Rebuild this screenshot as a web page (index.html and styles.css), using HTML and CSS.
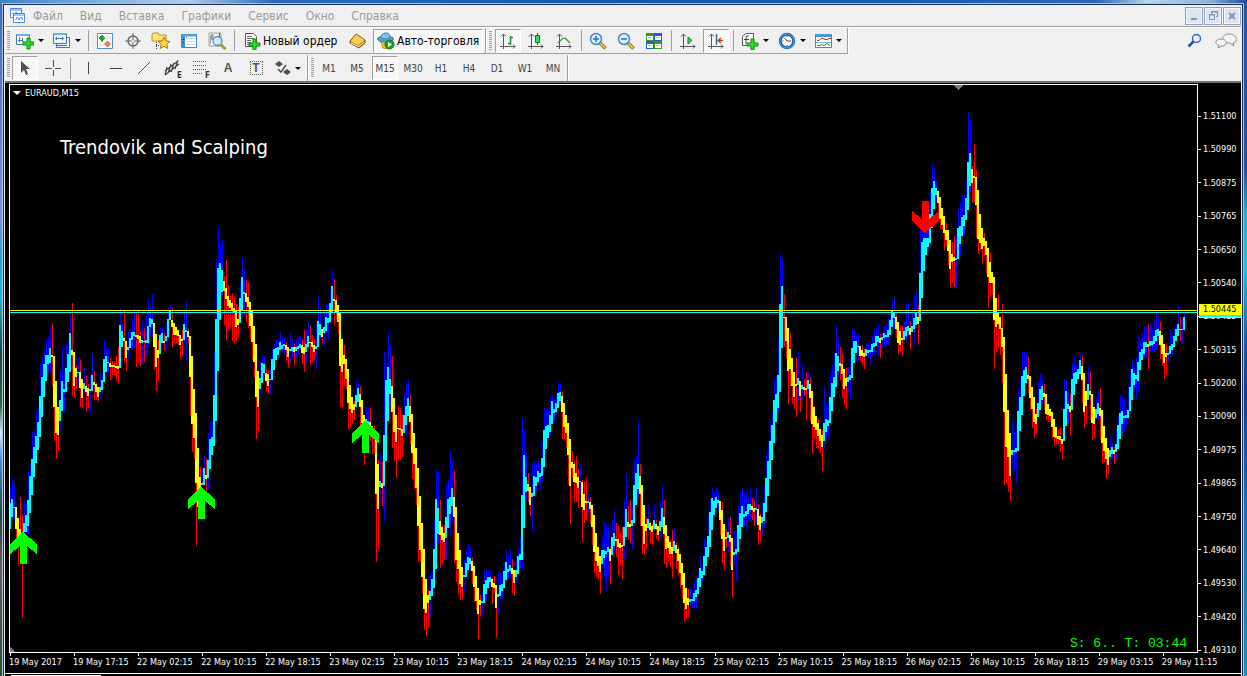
FILE: index.html
```html
<!DOCTYPE html>
<html lang="ru">
<head>
<meta charset="utf-8">
<title>EURAUD,M15</title>
<link rel="stylesheet" href="styles.css">
</head>
<body>
<div class="window">
  <header class="menubar">
    <svg class="app-icon" width="16" height="16" viewBox="0 0 16 16" fill="#fff" stroke="#4a86e8"><path d="M.5 .5h11v9H.5z"/><path d="M.5 2h11M2 5l2 2 2-3 2 2"/><path d="M3.500 5.500h11v9h-11z"/><path d="M3.500 7h11M5.500 12l2-3 1.500 3 2-3 2 3"/></svg>
    <nav class="menu">
      <button>Файл</button><button>Вид</button><button>Вставка</button><button>Графики</button><button>Сервис</button><button>Окно</button><button>Справка</button>
    </nav>
    <div class="win-buttons">
      <button aria-label="Свернуть"><svg width="16" height="16"><path d="M5 11h6" stroke="#8494a8" stroke-width="2"/></svg></button>
      <button aria-label="Восстановить"><svg width="16" height="16" fill="none" stroke="#8494a8"><path d="M6.500 6V3.500h6v5H11M6 4h7"/><path d="M4.500 6.500h5v5h-5zM4 7h6"/></svg></button>
      <button aria-label="Закрыть"><svg width="16" height="16"><path d="M5 5l6 6M11 5l-6 6" stroke="#8494a8" stroke-width="2"/></svg></button>
    </div>
  </header>

  <div class="toolrow">
    <div class="group">
      <i class="grip"></i>
      <button class="drop" aria-label="Новый график"><svg width="18" height="18" viewBox="0 0 18 18"><path d="M.5 2.500h13v10H.5z" fill="#fff" stroke="#3d7ab8"/><path d="M1 3h12" stroke="#6fb0e8" stroke-width="2"/><path d="M3.500 5v5M2 8.500h5M6.500 6v4" stroke="#3d7ab8"/><path d="M11 6h3v4h4v3h-4v4h-3v-4H7v-3h4z" fill="#2be02b" stroke="#088a08"/></svg></button>
      <button class="drop" aria-label="Профили"><svg width="18" height="18" viewBox="0 0 18 18" fill="#e9f4fd" stroke="#3d7ab8"><path d="M3.500 5.500h13v10h-13z"/><path d="M.5 1.500h13v10H.5z"/><path d="M1 2h12" stroke="#6fb0e8" stroke-width="2"/><path d="M2 6.500h9M3.500 5v3M9.500 5v3M4 13.500h10"/></svg></button>
      <i class="sep"></i>
      <button aria-label="Обзор рынка"><svg width="16" height="16" viewBox="0 0 16 16"><path d="M.5 .5h15v15H.5z" fill="#fff" stroke="#4a90cf"/><path d="M9 3h5M9 5h5M2 11h5M2 13h4" stroke="#cfdbe6"/><path d="M5 2l3 3-3 3-3-3z" fill="#22bb33" stroke="#0a7c18" stroke-width=".7"/><path d="M5 4v5" stroke="#0a7c18"/><path d="M10.500 14l-3-3 3-3 3 3z" fill="#f0884a" stroke="#b83a08" stroke-width=".7"/></svg></button>
      <button aria-label="Окно данных"><svg width="16" height="16" viewBox="0 0 16 16" fill="none" stroke="#666"><circle cx="8" cy="8" r="5" stroke-width="1.500"/><path d="M8 0v7M8 9v7M0 8h7M9 8h7"/></svg></button>
      <button aria-label="Навигатор"><svg width="20" height="18" viewBox="0 0 20 18"><path d="M1 2l1-1h5l1 2h7v6H1z" fill="#ffe47a" stroke="#c09020"/><path d="M5.500 10v7M5 13.500h3" stroke="#444" stroke-dasharray="1 1"/><path d="M13 5l1.800 4 4.200.4-3.200 2.800 1 4.300-3.800-2.300-3.800 2.300 1-4.300L7 9.400l4.200-.4z" fill="#ffd84a" stroke="#b07a14"/></svg></button>
      <button aria-label="Терминал"><svg width="16" height="16" viewBox="0 0 16 16"><path d="M.5 1.500h15v13H.5z" fill="#fff" stroke="#3f87c9"/><path d="M1 2.500h14" stroke="#55a0e0" stroke-width="2"/><path d="M1 3h3v11H1z" fill="#3f8fd6"/><path d="M6 5.500h8M6 8.500h8M6 11.500h8" stroke="#c9d9e8"/><path d="M2 6.500h1M2 9.500h1" stroke="#123"/><path d="M5 4.500h1" stroke="#e22"/></svg></button>
      <button aria-label="Тестер стратегий"><svg width="19" height="18" viewBox="0 0 19 18"><path d="M1 1v13h12V1zM2.500 3v9M5 2v4" fill="#f6f6f6" stroke="#a0a0a0"/><path d="M4 2v6M11.500 1v6" stroke="#555"/><path d="M12.500 12.500l5 4.500" stroke="#c49020" stroke-width="3"/><circle cx="9.500" cy="9" r="4.500" fill="#cfe8fb" fill-opacity=".9" stroke="#4a90d0" stroke-width="1.300"/></svg></button>
      <i class="sep"></i>
      <button class="wide order"><svg width="17" height="18" viewBox="0 0 17 18"><path d="M1.500 1.500h8l3 3v10h-11z" fill="#fff" stroke="#555"/><path d="M3 4.500h5M3 6.500h7M3 8.500h4M3 10.500h4M3 12.500h3" stroke="#666"/><path d="M9 7h3v4h4v3h-4v4H9v-4H5v-3h4z" fill="#2be02b" stroke="#088a08"/></svg>Новый ордер</button>
      <button aria-label="Редактор MetaEditor"><svg width="17" height="16" viewBox="0 0 17 16"><path d="M1 8l6-7 9 6v3l-6 5-9-5z" fill="#b87818" stroke="#8a560c"/><path d="M1.500 8.500L7 1.500l8.500 5.500-6 5z" fill="#f8cf58"/><path d="M2 10l8 3.500 5-4.500" fill="none" stroke="#fff0b8"/></svg></button>
      <button class="wide auto pressed"><svg width="18" height="18" viewBox="0 0 18 18"><path d="M3 8l3 8q5 2 8-3l1-6z" fill="#f0c23c" stroke="#b88a18"/><ellipse cx="8.500" cy="7" rx="8" ry="3" fill="#5ba4d4" stroke="#2d74a8"/><path d="M4 6q0-5 5-5 4 0 4 5-4 2-9 0z" fill="#84c4e8" stroke="#3b84b4"/><circle cx="12.500" cy="12.500" r="4.500" fill="#16a516" stroke="#0b7a0b"/><path d="M11 10l4 2.500-4 2.500z" fill="#fff"/></svg>Авто-торговля</button>
    </div>
    <div class="group second">
      <i class="grip"></i>
      <button class="pressed" aria-label="Бары"><svg width="16" height="16" viewBox="0 0 16 16" fill="none" stroke="#555"><path d="M3.500 16V1M1 3.500L3.500 1 6 3.500M0 13.500h15M13 11.500l2 2-2 2"/><path d="M10.500 3v9M8 10.500h2M11 4.500h2" stroke="#1f8a3a" stroke-width="1.500"/></svg></button>
      <button aria-label="Свечи"><svg width="16" height="16" viewBox="0 0 16 16" fill="none" stroke="#555"><path d="M3.500 16V1M1 3.500L3.500 1 6 3.500M0 13.500h15M13 11.500l2 2-2 2"/><path d="M9.500 0v12" stroke="#087a20"/><path d="M7.500 2.500h4v7h-4z" fill="#2fe060" stroke="#087a20"/></svg></button>
      <button aria-label="Линия"><svg width="16" height="16" viewBox="0 0 16 16" fill="none" stroke="#555"><path d="M3.500 16V1M1 3.500L3.500 1 6 3.500M0 13.500h15M13 11.500l2 2-2 2"/><path d="M2 10l4-4 3-1 5 5" stroke="#2a9a48" stroke-width="1.300"/></svg></button>
      <i class="sep"></i>
      <button aria-label="Приблизить"><svg width="18" height="18" viewBox="0 0 18 18"><path d="M10.500 10.500l6 6" stroke="#a87410" stroke-width="3.500"/><path d="M11 11l5 5" stroke="#f5d050" stroke-width="1.500"/><circle cx="7" cy="7" r="5.500" fill="#d8effc" stroke="#4a88c0" stroke-width="1.500"/><path d="M4 7h6M7 4v6" stroke="#2c70ac" stroke-width="1.500"/></svg></button>
      <button aria-label="Отдалить"><svg width="18" height="18" viewBox="0 0 18 18"><path d="M10.500 10.500l6 6" stroke="#a87410" stroke-width="3.500"/><path d="M11 11l5 5" stroke="#f5d050" stroke-width="1.500"/><circle cx="7" cy="7" r="5.500" fill="#d8effc" stroke="#4a88c0" stroke-width="1.500"/><path d="M4 7h6" stroke="#2c70ac" stroke-width="1.500"/></svg></button>
      <button aria-label="Окна рядом"><svg width="16" height="16" viewBox="0 0 16 16"><path d="M0 0h8v8H0z" fill="#3d9a12"/><path d="M8 0h8v8H8z" fill="#2060c8"/><path d="M0 8h8v8H0z" fill="#2060c8"/><path d="M8 8h8v8H8z" fill="#3d9a12"/><path d="M1 3h6v4H1zM9 3h6v4H9zM1 11h6v4H1zM9 11h6v4H9z" fill="#fff"/><path d="M2 4.500h4M10 4.500h4M2 12.500h4M10 12.500h4" stroke="#a8c4e8"/></svg></button>
      <i class="sep"></i>
      <button aria-label="Автопрокрутка"><svg width="16" height="16" viewBox="0 0 16 16" fill="none" stroke="#555"><path d="M3.500 16V1M1 3.500L3.500 1 6 3.500M0 13.500h15M13 11.500l2 2-2 2"/><path d="M8 4l4 3.500L8 11z" fill="#4fd46a" stroke="#087a20"/></svg></button>
      <button class="pressed" aria-label="Сдвиг графика"><svg width="16" height="16" viewBox="0 0 16 16" fill="none" stroke="#555"><path d="M3.500 16V1M1 3.500L3.500 1 6 3.500M0 13.500h15M13 11.500l2 2-2 2"/><path d="M8.500 1v11" stroke="#3070a0" stroke-width="1.500"/><path d="M10 7.500h5M13 5l-3 2.500L13 10" stroke="#c03a08" stroke-width="1.300"/></svg></button>
      <i class="sep"></i>
      <button class="drop" aria-label="Индикаторы"><svg width="18" height="18" viewBox="0 0 18 18"><path d="M1.500 4.500l3-3h8v12h-11z" fill="#fff" stroke="#555"/><path d="M8 4q-3-1-3 2v6M3 7.500h5" fill="none" stroke="#444"/><path d="M10 7h3v4h4v3h-4v4h-3v-4H6v-3h4z" fill="#2be02b" stroke="#088a08"/></svg></button>
      <button class="drop" aria-label="Периоды"><svg width="18" height="18" viewBox="0 0 18 18"><circle cx="9" cy="9" r="6.700" fill="#fff" stroke="#155cae" stroke-width="3"/><circle cx="9" cy="9" r="7" fill="none" stroke="#50a8f0"/><path d="M9 9L6.500 6M9 9h4M9 4v1M9 13v1M4.500 9h1" stroke="#444" fill="none"/></svg></button>
      <button class="drop" aria-label="Шаблоны"><svg width="17" height="16" viewBox="0 0 17 16"><path d="M.5 1.500h16v13H.5z" fill="#fff" stroke="#3f87c9"/><path d="M1 2.500h15" stroke="#4a98dc" stroke-width="3"/><path d="M1 9.500h15" stroke="#7aaede"/><path d="M2 7.500h2l2-2h2l2 1h2l2-1h2" fill="none" stroke="#a8321a"/><path d="M2 12.500h3l2-1 2 1 3-2 3 2" fill="none" stroke="#228a32"/></svg></button>
    </div>
    <div class="tools-right">
      <button aria-label="Поиск"><svg width="16" height="16" viewBox="0 0 16 16"><circle cx="9.500" cy="5.500" r="4" fill="#eaf2ff" stroke="#2f62d0" stroke-width="1.500"/><path d="M6.500 8.500L1.500 13.500" stroke="#2450b8" stroke-width="2.500"/></svg></button>
      <button aria-label="Сообщения"><svg width="22" height="16" viewBox="0 0 22 16" fill="#f4f4f4" stroke="#8c8c8c"><path d="M14 1c9 0 9 9 4 9l1 3-4-3C5 10 6 1 14 1z"/><path d="M6 6c7 0 7 7 1 7l-4 2 1-2.500C-1 11 0 6 6 6z"/></svg></button>
    </div>
  </div>

  <div class="toolrow lower">
    <div class="group">
      <i class="grip"></i>
      <button class="pressed" aria-label="Курсор"><svg width="16" height="16" viewBox="0 0 16 16"><path d="M4 1v12l3-3 2 5 2-1-2-5h4z" fill="#505050"/></svg></button>
      <button aria-label="Перекрестие"><svg width="16" height="16" stroke="#505050"><path d="M8.500 0v7M8.500 10v6M0 8.500h7M10 8.500h6"/></svg></button>
      <i class="sep"></i>
      <button aria-label="Вертикальная линия"><svg width="16" height="16"><path d="M8.500 2v12" stroke="#444"/></svg></button>
      <button aria-label="Горизонтальная линия"><svg width="16" height="16"><path d="M2 8.500h12" stroke="#444"/></svg></button>
      <button aria-label="Трендовая линия"><svg width="16" height="16"><path d="M2 14L14 2" stroke="#555"/></svg></button>
      <button class="tagged" aria-label="Канал"><svg width="16" height="16" fill="none" stroke="#444"><path d="M1 11l13-10M1 15L15 4M3 7l-2 8M7 4L4 13M10 3L7 12M14 0l-3 9" stroke-width="1.200"/></svg><small>E</small></button>
      <button class="tagged" aria-label="Фибоначчи"><svg width="16" height="16" stroke="#555" stroke-dasharray="1 1"><path d="M1 1.500h14M1 5.500h14M1 9.500h14M1 13.500h9"/></svg><small>F</small></button>
      <button class="letter">A</button>
      <button class="letter boxed"><span>T</span></button>
      <button class="drop" aria-label="Стрелки"><svg width="16" height="16" viewBox="0 0 16 16" fill="#505050"><path d="M4 1l4 3-4 3-4-3zM12 9l4 3-4 3-4-3z"/><path d="M3 9l3 3 5-7" fill="none" stroke="#505050" stroke-width="1.500"/></svg></button>
    </div>
    <div class="group periods">
      <i class="grip"></i>
      <button>M1</button><button>M5</button><button class="pressed">M15</button><button>M30</button><button>H1</button><button>H4</button><button>D1</button><button>W1</button><button>MN</button>
    </div>
  </div>

  <main class="chart">
    <div class="plot">
      <svg id="candles" viewBox="10 85 1187 567" preserveAspectRatio="none" shape-rendering="crispEdges" role="img" aria-label="EURAUD M15"></svg>
      <div class="symbol"><i class="caret"></i>EURAUD,M15</div>
      <h1>Trendovik and Scalping</h1>
      <div class="timer">S: 6.. T: 03:44</div>
    </div>
    <div class="prices">
      <ul>
        <li>1.51100</li><li>1.50990</li><li>1.50875</li><li>1.50765</li><li>1.50650</li><li>1.50540</li><li>1.50425</li><li>1.50315</li><li>1.50200</li><li>1.50090</li><li>1.49975</li><li>1.49865</li><li>1.49750</li><li>1.49640</li><li>1.49530</li><li>1.49420</li><li>1.49310</li>
      </ul>
      <b class="current">1.50445</b>
    </div>
    <ul class="times">
      <li>19 May 2017</li><li>19 May 17:15</li><li>22 May 02:15</li><li>22 May 10:15</li><li>22 May 18:15</li><li>23 May 02:15</li><li>23 May 10:15</li><li>23 May 18:15</li><li>24 May 02:15</li><li>24 May 10:15</li><li>24 May 18:15</li><li>25 May 02:15</li><li>25 May 10:15</li><li>25 May 18:15</li><li>26 May 02:15</li><li>26 May 10:15</li><li>26 May 18:15</li><li>29 May 03:15</li><li>29 May 11:15</li>
    </ul>
  </main>
  <div class="tabs"><i></i></div>
</div>
<script src="chart.js"></script>
</body>
</html>
```
FILE: styles.css
```css
* { box-sizing: border-box; }
html, body { height: 100%; }
body {
  margin: 0;
  padding: 4px 4px 0 3px;
  display: flex;
  font-family: "DejaVu Sans Condensed", "DejaVu Sans", sans-serif;
  background:
    linear-gradient(90deg, #3f7fc4 0, #7fb0dc 8%, #b3cdec 15%, #2a6cb8 22%, #0f57a8 50%, #1a5fae 75%, #2c67b4 88%, #b9d6ec 92%, #8fb4d8 97%, #1c4c98) top / 100% 4px no-repeat,
    linear-gradient(#2456a0 0, #28509a 25%, #22b0c8 32%, #20c0d0 40%, #1a5ea8 50%, #103c8c 58%, #1a6eb4 75%, #2090b0) right / 5px 100% no-repeat,
    linear-gradient(#3a6cb0 0, #9090d8 32%, #28a8c0 38%, #20b8d0 44%, #204838 52%, #2c6c30 60%, #d8ecff 64%, #5088e0 68%, #204830 76%, #705c50 84%, #305028) #234;
}
.window {
  flex: 1;
  min-width: 0;
  display: flex;
  flex-direction: column;
  background: #f0f0f0;
  border: 1px solid #1c2c5c;
  border-bottom: 0;
  box-shadow: 0 0 0 1px #a8c4e4;
  padding: 0 1px;
}
button { border: 0; padding: 0; background: none; font: inherit; color: inherit; display: flex; align-items: center; justify-content: center; }
svg { display: block; flex: none; }
ul { margin: 0; padding: 0; list-style: none; }

.menubar { display: flex; align-items: center; height: 22px; border-bottom: 1px solid #a0a0a0; padding-left: 5px; }
.menu { display: flex; flex: 1; font-size: 12px; color: #9a9a9a; }
.menu button { padding: 0 9px 0 8px; }
.app-icon { margin-right: -1px; }
.win-buttons { display: flex; gap: 1px; }
.win-buttons button { width: 18px; height: 18px; border: 1px solid #94a4b8; background: #dce6f2; box-shadow: inset 0 0 0 1px #f2f6fb; }

.toolrow { display: flex; height: 27px; border-top: 1px solid #fff; font-size: 12px; color: #000; }
.group { display: flex; align-items: center; border: solid #a0a0a0; border-width: 0 1px 1px 0; box-shadow: 1px 1px #fff; padding-left: 2px; }
.grip { width: 3px; height: 20px; margin-right: 1px; background: repeating-linear-gradient(#a0a0a0 0 1px, #f0f0f0 1px 2px); }
.group button { width: 28px; height: 24px; }
.group .pressed {
  width: 26px; margin: 0 1px;
  border: solid; border-width: 1px; border-color: #a0a0a0 #fff #fff #a0a0a0;
  background: repeating-conic-gradient(#fff 0 25%, #f0f0f0 0 50%) 0 0 / 2px 2px;
}
.group .drop { width: 37px; justify-content: flex-start; padding-left: 5px; gap: 4px; }
.drop::after, .caret { content: ""; border: solid transparent; border-width: 3px 3px 0; border-top-color: #000; }
.sep { width: 1px; height: 21px; margin: 0 2px 0 3px; background: #a0a0a0; }
.group .wide { width: 106px; gap: 2px; justify-content: flex-start; padding-left: 7px; white-space: nowrap; }
.group .auto { width: 110px; margin: 0 2px; padding-left: 3px; }
.second { padding-left: 3px; }
.second .grip { margin-right: 2px; }
.tools-right { display: flex; gap: 12px; margin-left: auto; padding-right: 4px; align-items: center; }
.lower { border-top-color: #f0f0f0; }
.lower .group { border-bottom: 0; box-shadow: 1px 0 #fff; }
.lower .sep { margin-right: 3px; }
.tagged { position: relative; color: #333; }
.tagged small { position: absolute; right: 4px; bottom: 0; font-size: 8px; line-height: 8px; font-weight: bold; background: #f0f0f0; }
.letter { font: bold 12px "Liberation Sans", sans-serif; }
.group .letter { color: #555; font-weight: bold; }
.boxed span { border: 1px dotted #555; width: 13px; height: 14px; line-height: 13px; }
.periods { font-size: 10px; color: #444; }
.group.periods { padding-left: 3px; }

.chart {
  flex: 1;
  min-height: 0;
  display: grid;
  grid-template: minmax(0, 1fr) 20px / minmax(0, 1fr) 43px;
  background: #000;
  color: #fff;
  border-top: 2px solid #707070;
  border-bottom: 1px solid #fff;
  padding: 1px 0 0 4px;
  font-size: 9px;
  line-height: 12px;
}
.plot { position: relative; border: 1px solid #fff; }
.plot > svg { width: 100%; height: 100%; }
.symbol { position: absolute; left: 3px; top: 2px; display: flex; align-items: center; gap: 4px; }
.caret { border-width: 4px 4px 0; border-top-color: #fff; }
.plot h1 { position: absolute; left: 50px; top: 50px; margin: 0; font-size: 20px; line-height: 24px; font-weight: normal; }
.timer { position: absolute; right: 10px; bottom: 1px; color: #0f0; font: 13px/14px "Liberation Mono", monospace; white-space: pre; }
.prices { position: relative; }
.prices ul { height: 100%; padding-top: 26px; display: flex; flex-direction: column; justify-content: space-between; }
.prices li { display: flex; align-items: center; gap: 2px; }
.prices li:last-child { margin-bottom: -3px; }
.prices li::before { content: ""; width: 3px; height: 1px; background: #fff; }
.current { position: absolute; left: 1px; right: 0; top: 220px; background: #ff0; color: #000; font-weight: normal; padding-left: 4px; border-bottom: 2px solid #0ff; line-height: 11px; box-shadow: 0 1px #fff; }
.times { grid-column: 1 / -1; display: flex; white-space: nowrap; padding-right: 43px; }
.times li { flex: 0 0 5.387%; width: 0; }
.times li::before { content: ""; display: block; width: 1px; height: 3px; margin-left: 1px; background: #fff; }
.tabs { height: 2px; background: #000; padding-top: 1px; }
.tabs i { display: block; width: 90px; height: 1px; margin-left: 6px; background: #fff; }
```
FILE: chart.js
```js
// Runs of bars: first x, direction, then "high open/close-top open/close-bottom low" for each bar, 2 units apart.
const runs = [
[10,'u','488 503 529 529,477 499 517 517,483 507 508 519'],
[16,'d','507 507 529 540,518 518 537 565,497 529 540 545,515 535 545 618'],
[24,'u','500 523 532 535,504 515 532 533,472 500 526 535,463 476 513 513,431 459 495 495,433 447 477 477,411 436 463 463,408 422 450 450,364 396 437 437,357 377 417 417,349 364 397 397,340 355 381 381,337 355 364 372,328 348 363 373'],
[52,'d','323 355 357 386,356 356 407 441,381 381 433 459,407 407 435 451'],
[60,'u','371 400 421 431,347 381 411 411,370 389 392 412,344 368 392 392,342 354 382 382,315 333 372 372'],
[72,'d','303 350 355 395,352 352 386 398,366 368 377 389'],
[78,'u','358 372 373 386'],
[80,'d','360 372 388 407,379 379 398 408'],
[84,'u','368 383 389 394'],
[86,'d','376 386 392 412,384 388 396 408'],
[90,'u','376 389 391 413,353 375 391 391'],
[94,'d','371 382 385 400,383 384 392 400,387 387 397 402'],
[100,'u','372 387 392 400,377 380 390 390,339 359 382 382,347 356 372 372,348 362 363 373'],
[110,'d','358 363 367 380,361 365 367 375,361 365 367 375,355 366 368 381,347 366 369 383'],
[120,'u','308 325 368 368,324 331 347 347'],
[124,'d','311 338 341 362,341 341 358 371'],
[128,'u','332 347 350 359,329 338 348 348,318 332 340 349,307 332 336 348'],
[136,'d','313 335 337 367,311 335 339 363,331 336 343 366'],
[142,'u','321 340 343 364'],
[144,'d','328 341 342 362'],
[146,'u','316 340 343 356,300 326 343 347,308 318 327 336,294 319 324 337'],
[154,'d','323 323 347 370,334 334 367 391,340 350 358 381'],
[160,'u','328 335 354 354,327 333 343 343'],
[164,'d','333 341 343 351'],
[166,'u','323 336 341 350,308 319 337 337,306 311 320 320'],
[172,'d','308 320 327 347,323 323 335 343,327 327 335 343,330 330 336 345,335 335 345 359,330 339 341 356'],
[184,'u','311 324 340 344,301 330 332 361'],
[188,'d','329 331 337 343,336 336 377 416,356 356 424 452,389 389 438 459,413 413 483 546,448 448 507 507,467 477 507 507'],
[202,'u','469 483 485 485,455 468 485 485'],
[206,'d','458 475 479 502'],
[208,'u','433 460 478 489,421 439 469 469,422 437 455 455,351 395 446 446,259 319 421 421,227 268 371 371,244 263 320 320,240 270 292 295'],
[224,'d','276 281 291 325,260 288 299 340,285 296 306 330,296 300 308 327,293 303 310 341,296 308 313 343,304 310 327 341,307 319 325 337'],
[240,'u','281 298 323 323,258 277 310 310,270 292 294 315'],
[246,'d','280 293 302 322,282 297 307 328,302 302 326 339,310 310 342 360,326 326 362 378,344 344 397 439,371 371 407 431'],
[260,'u','361 378 389 398,355 363 383 383,355 364 373 376'],
[266,'d','368 373 381 391,370 374 386 394'],
[270,'u','370 379 380 394,350 359 380 380,343 349 370 370,340 348 360 360,340 347 355 358,332 342 350 350,337 345 349 352,337 344 346 355'],
[286,'d','342 345 350 361,347 347 357 368'],
[290,'u','333 349 351 362,339 347 351 357'],
[294,'d','343 347 352 365'],
[296,'u','340 347 351 357,338 346 349 355,336 344 348 350'],
[302,'d','340 345 353 364,330 347 354 372'],
[306,'u','330 344 352 363,322 336 347 349'],
[310,'d','326 342 343 365,335 342 347 363,339 345 352 360'],
[316,'u','323 346 349 370,295 321 347 347,307 324 335 338'],
[322,'d','329 329 337 343'],
[324,'u','310 327 333 346,303 317 331 333,304 318 323 339,290 303 322 322,270 286 312 312'],
[334,'d','279 299 301 326,295 300 312 320,305 305 322 334,312 312 366 407,339 339 372 407,345 355 364 386,359 359 379 390,369 369 403 430,385 385 409 428,397 397 413 424,401 404 410 420'],
[356,'u','380 395 407 410,383 388 402 402'],
[360,'d','386 394 407 427,400 400 423 425,415 415 437 465'],
[366,'u','407 419 423 430,407 421 427 430'],
[370,'d','408 422 432 441,426 426 437 454,426 432 439 453,438 438 494 562,460 464 509 550'],
[380,'u','454 481 487 504'],
[382,'d','462 483 488 506'],
[384,'u','352 435 486 521,363 380 461 461,332 367 421 421,346 379 394 406'],
[392,'d','356 386 412 448,398 398 432 461,415 415 442 478,406 428 429 460,408 428 430 460,415 429 436 457'],
[404,'u','393 415 433 433,383 406 425 436,380 398 416 416'],
[410,'d','395 406 422 444,414 414 453 479,433 433 464 489,448 448 488 505,468 468 526 562,496 496 550 562,523 523 577 594,549 549 609 630,579 579 613 636,590 595 603 627'],
[430,'u','574 591 600 618,572 579 596 596,520 549 588 588,469 499 569 569,472 508 534 543'],
[440,'d','500 521 535 568,525 527 540 564,525 533 542 560'],
[446,'u','483 517 538 560,479 499 528 528,452 497 514 535,462 488 506 521'],
[454,'d','470 497 517 563,507 507 560 582,533 533 569 594,550 550 584 600,567 567 587 600'],
[464,'u','560 575 577 591,549 563 577 577,544 557 570 570,547 558 564 570'],
[472,'d','557 561 571 584,566 566 587 602,576 576 601 610,588 588 614 639,595 600 605 616'],
[482,'u','592 601 603 616,571 584 603 603,569 580 594 599,570 577 588 588,571 577 582 585'],
[492,'d','578 579 587 604,576 583 588 593,585 585 608 637'],
[498,'u','571 594 597 613,573 585 596 598,574 584 591 600,563 571 588 588,551 562 580 580,556 569 572 579,549 565 571 577'],
[512,'d','559 568 574 593,570 570 583 596'],
[516,'u','557 570 577 583,549 556 574 574,538 554 560 568,418 495 560 570,430 455 528 528,453 477 492 499'],
[528,'d','473 484 491 502,487 487 505 516'],
[532,'u','463 493 497 532,461 476 496 496,464 477 486 492,459 471 482 482,464 473 477 489,442 458 476 482,407 430 467 467,409 426 449 449,410 425 438 438,397 415 432 435,395 401 424 424,399 409 413 422,394 403 412 414,382 393 408 408,383 392 401 403'],
[562,'d','391 396 412 439,403 403 427 439,415 415 433 448,423 423 455 484,439 439 486 524,451 462 468 478,461 464 482 502,456 473 483 502,469 477 488 508'],
[580,'u','464 481 482 494'],
[582,'d','480 482 507 542,481 494 510 523,478 501 503 520'],
[588,'u','494 501 503 514'],
[590,'d','497 502 509 524,505 505 527 545,515 515 552 573,533 533 561 577,547 547 566 579,556 556 572 594'],
[602,'u','535 550 564 567,522 550 558 580,525 551 554 591,526 547 552 577'],
[610,'d','547 549 561 584'],
[612,'u','519 537 555 557,510 533 546 551'],
[616,'d','523 539 541 557,526 539 547 575,533 543 548 566,527 545 547 579'],
[624,'u','499 527 546 560,473 509 537 537'],
[628,'d','506 522 527 540,500 524 527 543'],
[632,'u','499 520 526 550,459 485 523 523,456 473 505 505,421 464 489 498'],
[640,'d','464 476 494 526,485 485 526 554,505 505 544 555,517 524 531 550'],
[648,'u','505 519 528 531'],
[650,'d','522 523 530 543,524 526 532 545'],
[654,'u','503 520 529 531'],
[656,'d','520 524 529 539,526 526 535 541'],
[660,'u','502 521 531 537,485 508 527 527'],
[664,'d','500 517 534 564,525 525 549 568,536 536 548 561,540 542 554 567,530 547 554 578'],
[674,'u','528 541 551 551'],
[676,'d','542 545 553 569,547 549 561 575,554 554 573 588,563 563 585 599,573 573 603 622,588 588 609 619,589 598 605 617'],
[690,'u','588 599 602 606,590 599 601 608,581 593 601 607,579 590 597 609,572 578 594 594,555 568 587 587,566 571 578 582,538 556 575 575,541 547 566 566,515 536 557 557,499 512 547 547,488 498 530 530,492 501 515 517,488 497 508 508,491 500 503 512'],
[720,'d','501 501 520 535,502 510 539 563,524 524 551 570,529 537 539 548'],
[728,'u','518 532 538 552'],
[730,'d','517 535 542 566,538 538 570 598'],
[734,'u','531 552 555 566,531 549 554 582,505 525 552 552,492 513 539 539,488 506 527 527,493 514 517 525,492 511 516 529,497 504 514 519,488 504 510 522'],
[752,'d','498 506 510 520,501 508 512 526'],
[756,'u','488 508 510 523'],
[758,'d','505 509 525 545,514 516 530 542'],
[762,'u','503 517 523 534,486 503 521 528,454 478 512 512,444 461 496 496,421 441 479 479,412 425 460 460,379 400 443 443,376 394 422 422,338 375 408 412,254 304 392 392,259 286 348 348'],
[784,'d','294 317 318 347,317 317 341 359,328 328 371 404,333 349 369 386,358 358 386 404,372 372 397 409,357 384 386 417'],
[798,'u','351 378 385 402'],
[800,'d','381 381 396 412'],
[802,'u','363 385 389 399'],
[804,'d','379 387 390 396,372 388 390 420'],
[808,'u','371 380 389 394'],
[810,'d','377 384 398 421,391 391 424 454,406 407 427 439,416 416 430 448,419 423 436 449,429 429 441 453,430 435 447 471'],
[824,'u','387 423 441 449,404 419 432 438,401 420 426 440,374 397 423 423,365 383 411 411,353 377 397 397,325 353 387 387,339 356 371 375'],
[840,'d','347 363 366 380,353 364 374 398,369 369 389 405,368 378 386 409'],
[848,'u','367 377 382 392,358 375 380 399,330 348 378 378,330 341 363 363,335 341 353 353,333 346 347 362'],
[860,'d','346 346 356 361,345 350 356 365,349 353 357 369'],
[866,'u','343 349 356 356,343 350 353 358,343 350 352 364,336 344 352 356,329 343 347 356,327 336 346 346,324 336 342 356'],
[880,'d','334 338 343 358'],
[882,'u','334 337 340 347,326 333 338 345,325 335 337 346,318 330 337 345,315 320 335 335,301 310 327 327,297 313 318 329'],
[896,'d','313 317 329 338,322 322 343 354,326 331 345 352,326 338 340 356'],
[904,'u','322 331 340 340,304 327 336 342,302 326 331 336'],
[910,'d','321 328 335 349'],
[912,'u','308 326 332 332,295 318 329 346,291 313 325 325'],
[918,'d','305 317 324 344'],
[920,'u','229 273 321 321,227 242 298 298,227 238 271 271,227 238 255 255,227 238 247 250,192 214 243 243,164 188 228 228,169 181 209 209,179 188 195 201'],
[938,'d','191 191 203 215,197 197 219 229,208 208 225 230,216 216 233 250,223 230 240 246,230 230 251 265,240 240 269 288,242 254 262 283,236 257 261 287'],
[956,'u','233 258 260 288,209 228 259 259,202 226 244 255,195 217 236 236,195 215 226 236,180 198 220 220,112 162 210 210,119 153 186 191'],
[972,'d','166 169 183 203,144 176 178 202,170 177 205 237,190 190 239 254,214 214 243 250,228 228 249 263,233 238 246 256,241 241 255 273,248 248 277 307,253 262 283 297,272 272 283 295,277 277 320 369,298 298 327 352,294 312 324 348,317 317 329 355,304 328 347 383,337 337 412 485,374 374 447 483,410 410 457 492,433 433 476 501'],
[1012,'u','419 450 455 474,432 450 452 470,423 448 452 483,390 411 451 451,380 397 431 431,352 376 415 415,351 370 396 396,354 367 383 383'],
[1028,'d','357 375 379 393,376 376 398 410,387 387 409 428,397 397 422 438,409 414 424 434'],
[1038,'u','382 403 417 417,374 389 410 410,378 386 400 403'],
[1044,'d','384 393 397 410,394 394 414 420,404 404 415 422,409 409 416 422,412 412 427 438,419 419 437 446,427 427 438 444,430 436 439 444,428 436 440 452,439 439 444 460'],
[1064,'u','379 409 441 441,380 391 426 426,392 404 409 423'],
[1070,'d','394 406 412 435'],
[1072,'u','363 379 410 410,355 373 395 395,366 372 384 384,362 369 379 379,354 360 374 374'],
[1082,'d','355 366 380 403,373 373 412 428,391 391 406 424'],
[1088,'u','366 384 400 400'],
[1090,'d','372 391 395 420,394 394 423 440,407 407 424 438'],
[1096,'u','398 409 418 420,391 403 414 420'],
[1100,'d','388 408 416 440,410 410 443 463,426 426 451 462,438 438 459 479,448 448 465 474'],
[1110,'u','435 450 457 464,443 447 454 458'],
[1114,'d','447 450 454 464'],
[1116,'u','429 444 452 460,416 425 449 449,395 413 439 439,396 411 424 433,399 416 418 431,410 415 418 425,387 410 418 418,369 387 411 411,360 369 400 400,365 373 385 389,358 375 379 400,335 362 381 391,342 352 370 370,333 349 360 360,326 342 354 357,328 342 347 358'],
[1148,'d','324 344 347 369'],
[1150,'u','324 341 346 352,330 341 345 352,321 336 344 352,313 330 341 350,318 329 336 340'],
[1160,'d','322 331 345 359,335 335 354 366,344 344 363 379,343 353 357 375'],
[1168,'u','351 353 355 362,329 346 354 354,335 344 350 355,328 336 347 347,326 329 341 341,306 324 336 336'],
[1180,'d','317 329 330 341'],
[1182,'u','320 329 330 344,311 317 330 330']
];

const wicks = { u: '', d: '' };
const bodies = { u: '', d: '' };
for (const [start, dir, text] of runs) {
  text.split(',').forEach((bar, i) => {
    const x = start + i * 2;
    const [high, top, bottom, low] = bar.split(' ').map(Number);
    wicks[dir] += `M${x} ${high}h1V${low}h-1z`;
    bodies[dir] += `M${x - 1} ${top}h2V${bottom}h-2z`;
  });
}

const path = (d, fill) => `<path d="${d}" fill="${fill}"/>`;
const arrow = (x, y, s) =>
  `M${x} ${y}l14 ${12 * s}v${10 * s}l-10 ${-8 * s}v${18 * s}h-7v${-18 * s}l-10 ${8 * s}v${-10 * s}z`;

document.getElementById('candles').innerHTML =
  path(wicks.u, '#00f') + path(wicks.d, '#f00') +
  path(bodies.u, '#0ff') + path(bodies.d, '#ff0') +
  path('M10 310h1187v1H10z', '#ff0') + path('M10 312h1187v1H10z', '#0ff') +
  path(arrow(23, 532, 1) + arrow(201, 487, 1) + arrow(365, 421, 1), '#0f0') +
  path(arrow(925, 233, -1), '#f00') +
  path('M953 85h10l-5 5zM10 647l5 5h-5z', '#708090');
```
